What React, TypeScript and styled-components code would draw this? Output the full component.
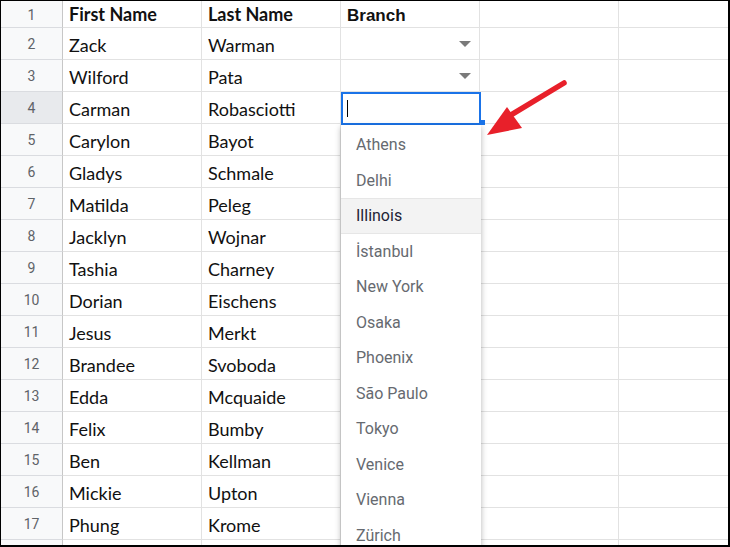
import React from "react";
import styled, { createGlobalStyle } from "styled-components";

const Global = createGlobalStyle`
  html, body { margin: 0; padding: 0; background: #fff; }
  * { box-sizing: border-box; }
`;

const Frame = styled.div`
  position: relative;
  width: 730px;
  height: 547px;
  overflow: hidden;
  border-style: solid;
  border-color: #000;
  border-width: 1px 2px 2px 1px;
  background: #fff;
`;

const Sheet = styled.div`
  display: flex;
  flex-direction: column;
`;

const Row = styled.div<{ $head?: boolean }>`
  display: grid;
  grid-template-columns: 62px 139px 139px 139px 139px 139px;
  height: ${(p) => (p.$head ? 27 : 32)}px;
  flex: none;
`;

const RowNum = styled.div<{ $sel?: boolean }>`
  display: flex;
  align-items: center;
  justify-content: center;
  padding-top: 1px;
  background: ${(p) => (p.$sel ? "#e8eaed" : "#f8f9fa")};
  border-right: 1px solid #c7c7c7;
  border-bottom: 1px solid #dadce0;
  font-family: Roboto, "Liberation Sans", sans-serif;
  font-size: 14px;
  color: #5f6368;
`;

const Cell = styled.div<{ $bold?: boolean; $arial?: boolean; $head?: boolean }>`
  display: flex;
  align-items: center;
  padding: ${(p) => (p.$head ? (p.$arial ? "3px 6px 0" : "0 6px 1px") : "3px 6px 0")};
  border-right: 1px solid #e2e2e2;
  border-bottom: 1px solid #e2e2e2;
  font-family: ${(p) => (p.$arial ? '"Liberation Sans", Arial' : 'Lato, "Open Sans"')}, sans-serif;
  font-size: ${(p) => (p.$arial ? 17 : 18)}px;
  font-weight: ${(p) => (p.$bold ? 700 : 400)};
  color: #111;
  white-space: nowrap;
  overflow: hidden;
`;

const Caret = styled.span`
  margin-left: auto;
  margin-right: 2px;
  margin-top: -3px;
  width: 0;
  height: 0;
  border-left: 6px solid transparent;
  border-right: 6px solid transparent;
  border-top: 6px solid #7a7a7a;
`;

const Picker = styled.div`
  position: absolute;
  left: 340px;
  top: 91px;
  width: 140px;
  display: flex;
  flex-direction: column;
`;

const Editor = styled.div`
  height: 33px;
  background: #fff;
  border: 2px solid #1a73e8;
  display: flex;
  align-items: center;
  padding-left: 4px;
`;

const Cursor = styled.span`
  width: 1px;
  height: 17px;
  background: #000;
`;

const Handle = styled.span`
  position: absolute;
  right: -4px;
  top: 28px;
  width: 5px;
  height: 5px;
  background: #1a73e8;
`;

const List = styled.div`
  background: #fff;
  box-shadow: 0 2px 6px rgba(0, 0, 0, 0.3);
  padding-top: 2px;
  display: flex;
  flex-direction: column;
`;

const Item = styled.div<{ $hover?: boolean }>`
  height: 35.5px;
  flex: none;
  display: flex;
  align-items: center;
  padding-left: 15px;
  font-family: Roboto, "Liberation Sans", sans-serif;
  font-size: 16px;
  color: ${(p) => (p.$hover ? "#1f1f36" : "#666a70")};
  background: ${(p) => (p.$hover ? "#f3f3f3" : "#fff")};
  border-top: ${(p) => (p.$hover ? "1px solid #e6e6e6" : "none")};
  border-bottom: ${(p) => (p.$hover ? "1px solid #e6e6e6" : "none")};
`;

const ArrowLayer = styled.svg`
  position: absolute;
  left: 0;
  top: 0;
  width: 730px;
  height: 547px;
  pointer-events: none;
`;

const people: [string, string][] = [
  ["Zack", "Warman"],
  ["Wilford", "Pata"],
  ["Carman", "Robasciotti"],
  ["Carylon", "Bayot"],
  ["Gladys", "Schmale"],
  ["Matilda", "Peleg"],
  ["Jacklyn", "Wojnar"],
  ["Tashia", "Charney"],
  ["Dorian", "Eischens"],
  ["Jesus", "Merkt"],
  ["Brandee", "Svoboda"],
  ["Edda", "Mcquaide"],
  ["Felix", "Bumby"],
  ["Ben", "Kellman"],
  ["Mickie", "Upton"],
  ["Phung", "Krome"],
  ["", ""],
];

const cities = [
  "Athens",
  "Delhi",
  "Illinois",
  "İstanbul",
  "New York",
  "Osaka",
  "Phoenix",
  "São Paulo",
  "Tokyo",
  "Venice",
  "Vienna",
  "Zürich",
];

export default function App() {
  return (
    <>
      <Global />
      <Frame>
        <Sheet>
          <Row $head>
            <RowNum>1</RowNum>
            <Cell $head $bold>First Name</Cell>
            <Cell $head $bold>Last Name</Cell>
            <Cell $head $bold $arial>Branch</Cell>
            <Cell $head />
            <Cell $head />
          </Row>
          {people.map(([f, l], i) => {
            const n = i + 2;
            return (
              <Row key={n}>
                <RowNum $sel={n === 4}>{n < 18 ? n : ""}</RowNum>
                <Cell>{f}</Cell>
                <Cell>{l}</Cell>
                <Cell>{n === 2 || n === 3 ? <Caret /> : null}</Cell>
                <Cell />
                <Cell />
              </Row>
            );
          })}
        </Sheet>
        <Picker>
          <Editor>
            <Cursor />
            <Handle />
          </Editor>
          <List>
            {cities.map((c) => (
              <Item key={c} $hover={c === "Illinois"}>
                {c}
              </Item>
            ))}
          </List>
        </Picker>
        <ArrowLayer viewBox="0 0 730 547">
          <line x1="563" y1="82" x2="505" y2="117" stroke="#e8202a" strokeWidth="5.5" strokeLinecap="round" />
          <polygon points="486,134 506,106 521,127" fill="#e8202a" />
        </ArrowLayer>
      </Frame>
    </>
  );
}
